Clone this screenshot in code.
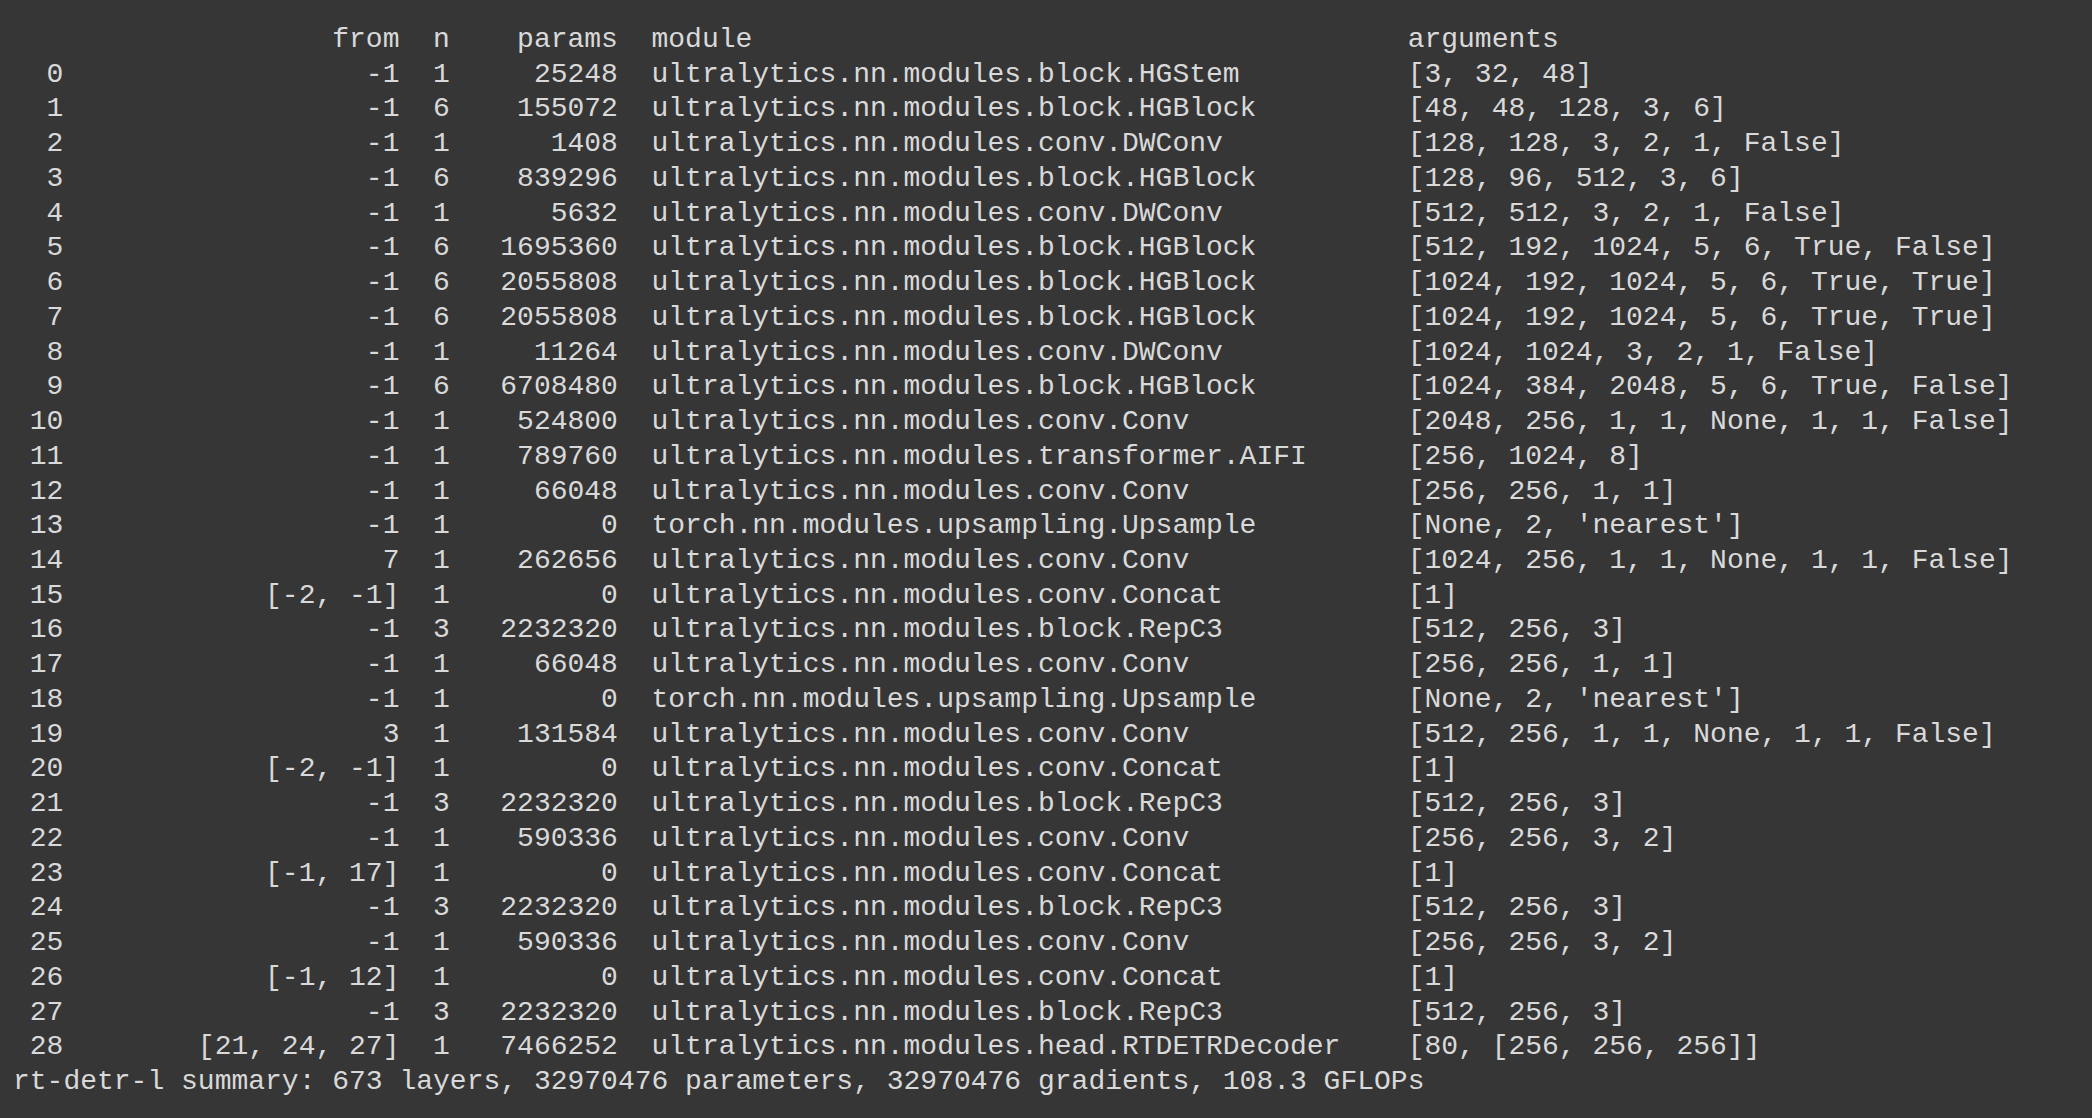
import React from 'react';

type Row = [number, string, number, number, string, string];

const rows: Row[] = [
  [0, '-1', 1, 25248, 'ultralytics.nn.modules.block.HGStem', '[3, 32, 48]'],
  [1, '-1', 6, 155072, 'ultralytics.nn.modules.block.HGBlock', '[48, 48, 128, 3, 6]'],
  [2, '-1', 1, 1408, 'ultralytics.nn.modules.conv.DWConv', '[128, 128, 3, 2, 1, False]'],
  [3, '-1', 6, 839296, 'ultralytics.nn.modules.block.HGBlock', '[128, 96, 512, 3, 6]'],
  [4, '-1', 1, 5632, 'ultralytics.nn.modules.conv.DWConv', '[512, 512, 3, 2, 1, False]'],
  [5, '-1', 6, 1695360, 'ultralytics.nn.modules.block.HGBlock', '[512, 192, 1024, 5, 6, True, False]'],
  [6, '-1', 6, 2055808, 'ultralytics.nn.modules.block.HGBlock', '[1024, 192, 1024, 5, 6, True, True]'],
  [7, '-1', 6, 2055808, 'ultralytics.nn.modules.block.HGBlock', '[1024, 192, 1024, 5, 6, True, True]'],
  [8, '-1', 1, 11264, 'ultralytics.nn.modules.conv.DWConv', '[1024, 1024, 3, 2, 1, False]'],
  [9, '-1', 6, 6708480, 'ultralytics.nn.modules.block.HGBlock', '[1024, 384, 2048, 5, 6, True, False]'],
  [10, '-1', 1, 524800, 'ultralytics.nn.modules.conv.Conv', '[2048, 256, 1, 1, None, 1, 1, False]'],
  [11, '-1', 1, 789760, 'ultralytics.nn.modules.transformer.AIFI', '[256, 1024, 8]'],
  [12, '-1', 1, 66048, 'ultralytics.nn.modules.conv.Conv', '[256, 256, 1, 1]'],
  [13, '-1', 1, 0, 'torch.nn.modules.upsampling.Upsample', "[None, 2, 'nearest']"],
  [14, '7', 1, 262656, 'ultralytics.nn.modules.conv.Conv', '[1024, 256, 1, 1, None, 1, 1, False]'],
  [15, '[-2, -1]', 1, 0, 'ultralytics.nn.modules.conv.Concat', '[1]'],
  [16, '-1', 3, 2232320, 'ultralytics.nn.modules.block.RepC3', '[512, 256, 3]'],
  [17, '-1', 1, 66048, 'ultralytics.nn.modules.conv.Conv', '[256, 256, 1, 1]'],
  [18, '-1', 1, 0, 'torch.nn.modules.upsampling.Upsample', "[None, 2, 'nearest']"],
  [19, '3', 1, 131584, 'ultralytics.nn.modules.conv.Conv', '[512, 256, 1, 1, None, 1, 1, False]'],
  [20, '[-2, -1]', 1, 0, 'ultralytics.nn.modules.conv.Concat', '[1]'],
  [21, '-1', 3, 2232320, 'ultralytics.nn.modules.block.RepC3', '[512, 256, 3]'],
  [22, '-1', 1, 590336, 'ultralytics.nn.modules.conv.Conv', '[256, 256, 3, 2]'],
  [23, '[-1, 17]', 1, 0, 'ultralytics.nn.modules.conv.Concat', '[1]'],
  [24, '-1', 3, 2232320, 'ultralytics.nn.modules.block.RepC3', '[512, 256, 3]'],
  [25, '-1', 1, 590336, 'ultralytics.nn.modules.conv.Conv', '[256, 256, 3, 2]'],
  [26, '[-1, 12]', 1, 0, 'ultralytics.nn.modules.conv.Concat', '[1]'],
  [27, '-1', 3, 2232320, 'ultralytics.nn.modules.block.RepC3', '[512, 256, 3]'],
  [28, '[21, 24, 27]', 1, 7466252, 'ultralytics.nn.modules.head.RTDETRDecoder', '[80, [256, 256, 256]]'],
];

// same layout as the python f-string: {i:>3}{from:>20}{n:>3}{params:>10}  {module:<45}{args}
const header =
  ''.padStart(3) + 'from'.padStart(20) + 'n'.padStart(3) + 'params'.padStart(10) + '  ' + 'module'.padEnd(45) + 'arguments';

const fmt = (r: Row) =>
  String(r[0]).padStart(3) +
  r[1].padStart(20) +
  String(r[2]).padStart(3) +
  String(r[3]).padStart(10) +
  '  ' +
  r[4].padEnd(45) +
  r[5];

const summary = 'rt-detr-l summary: 673 layers, 32970476 parameters, 32970476 gradients, 108.3 GFLOPs';

export default function App() {
  const lines = [header, ...rows.map(fmt), summary];
  return (
    <div className="w-[2092px] h-[1118px] bg-[#363636] overflow-hidden">
      <div className="pt-[23px] pl-[13px] font-['Liberation_Mono',monospace] text-[28px] leading-[34.73px] text-[#d9d9d9] whitespace-pre">
        {lines.map((line, i) => (
          <div key={i}>{line}</div>
        ))}
      </div>
    </div>
  );
}
